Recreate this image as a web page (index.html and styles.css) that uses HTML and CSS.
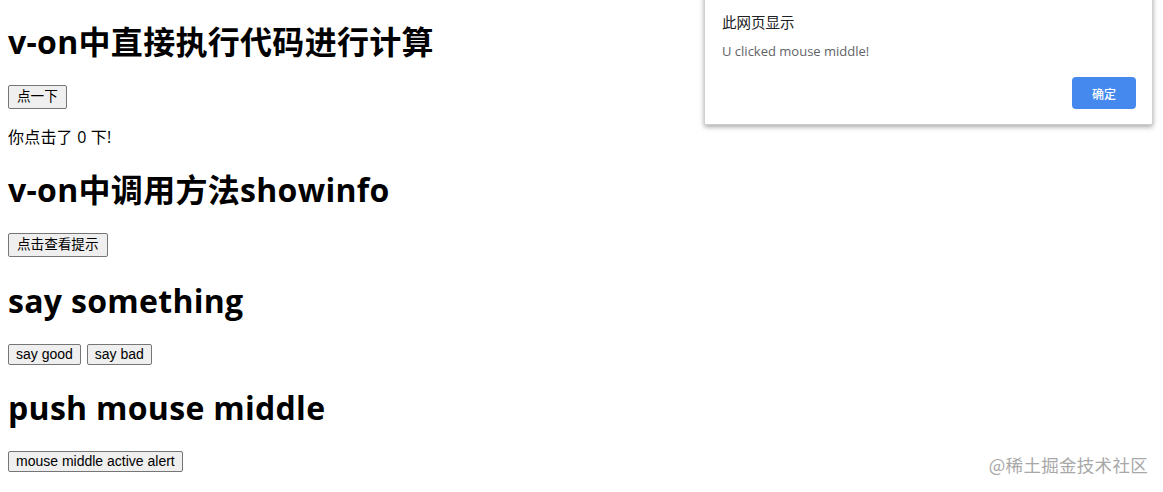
FILE: index.html
```html
<!DOCTYPE html>
<html lang="zh-CN">
<head>
<meta charset="utf-8">
<title>v-on</title>
<link rel="stylesheet" href="styles.css">
</head>
<body>
<div id="app" class="page">
  <h1 class="title">v-on中直接执行代码进行计算</h1>
  <div class="row row-cjk"><button class="btn">点一下</button></div>
  <p class="count">你点击了 0 下!</p>

  <h1 class="title">v-on中调用方法showinfo</h1>
  <div class="row row-cjk"><button class="btn">点击查看提示</button></div>

  <h1 class="title">say something</h1>
  <div class="row"><button class="btn">say good</button><button class="btn">say bad</button></div>

  <h1 class="title">push mouse middle</h1>
  <div class="row"><button class="btn">mouse middle active alert</button></div>
</div>

<div class="dialog" role="alertdialog">
  <div class="dialog-title">此网页显示</div>
  <div class="dialog-msg">U clicked mouse middle!</div>
  <div class="dialog-actions"><button class="dialog-ok">确定</button></div>
</div>

<div class="watermark">@稀土掘金技术社区</div>
</body>
</html>
```

FILE: styles.css
```css
html, body {
  margin: 0;
  padding: 0;
  background: #fff;
}

body {
  font-family: "Open Sans", "Noto Sans CJK SC", sans-serif;
  font-size: 16px;
  line-height: 21px;
  color: #000;
}

.page {
  padding: 0 8px;
  display: flow-root;
}

.title {
  font-size: 32px;
  line-height: 42px;
  font-weight: 700;
  letter-spacing: 0.3px;
  margin: 21px 0 22px;
  white-space: nowrap;
}

.row {
  display: flex;
  align-items: flex-start;
  gap: 6px;
  height: 22px;
}

.row-cjk {
  height: 26px;
}

.btn {
  font-family: "Liberation Sans", "Noto Sans CJK SC", sans-serif;
  font-size: 14px;
  line-height: 17px;
  padding: 1px 7px;
  border: 1px solid #767676;
  border-radius: 2px;
  background: #efefef;
  color: #000;
  margin: 0;
}

.row-cjk .btn {
  font-size: 13.6px;
  line-height: 20px;
  padding: 1px 8px;
}

.count {
  margin: 16px 0;
  font-size: 16px;
  line-height: 21px;
  letter-spacing: 0.2px;
}

.dialog {
  position: absolute;
  left: 704px;
  top: -6px;
  width: 449px;
  height: 131px;
  box-sizing: border-box;
  padding: 17px 16px 0 17px;
  background: #fff;
  border: 1px solid #d0d0d0;
  border-radius: 2px;
  box-shadow: 0 2px 5px rgba(0, 0, 0, 0.35);
  font-family: "Open Sans", "Noto Sans CJK SC", sans-serif;
}

.dialog-title {
  font-size: 14.5px;
  line-height: 20px;
  color: #202124;
  font-family: "Noto Sans CJK SC", sans-serif;
}

.dialog-msg {
  margin-top: 10px;
  font-size: 13px;
  line-height: 18px;
  color: #5f6368;
}

.dialog-actions {
  display: flex;
  justify-content: flex-end;
  margin-top: 17px;
}

.dialog-ok {
  width: 64px;
  height: 32px;
  border: none;
  border-radius: 4px;
  background: #4589ee;
  color: #fff;
  font-family: "Noto Sans CJK SC", sans-serif;
  font-size: 12px;
  font-weight: 500;
  padding: 0;
}

.watermark {
  position: absolute;
  right: 15px;
  top: 453px;
  font-family: "Noto Sans CJK SC", sans-serif;
  font-size: 17.5px;
  line-height: 24px;
  color: #a8a8a8;
  letter-spacing: 0.3px;
}
```
